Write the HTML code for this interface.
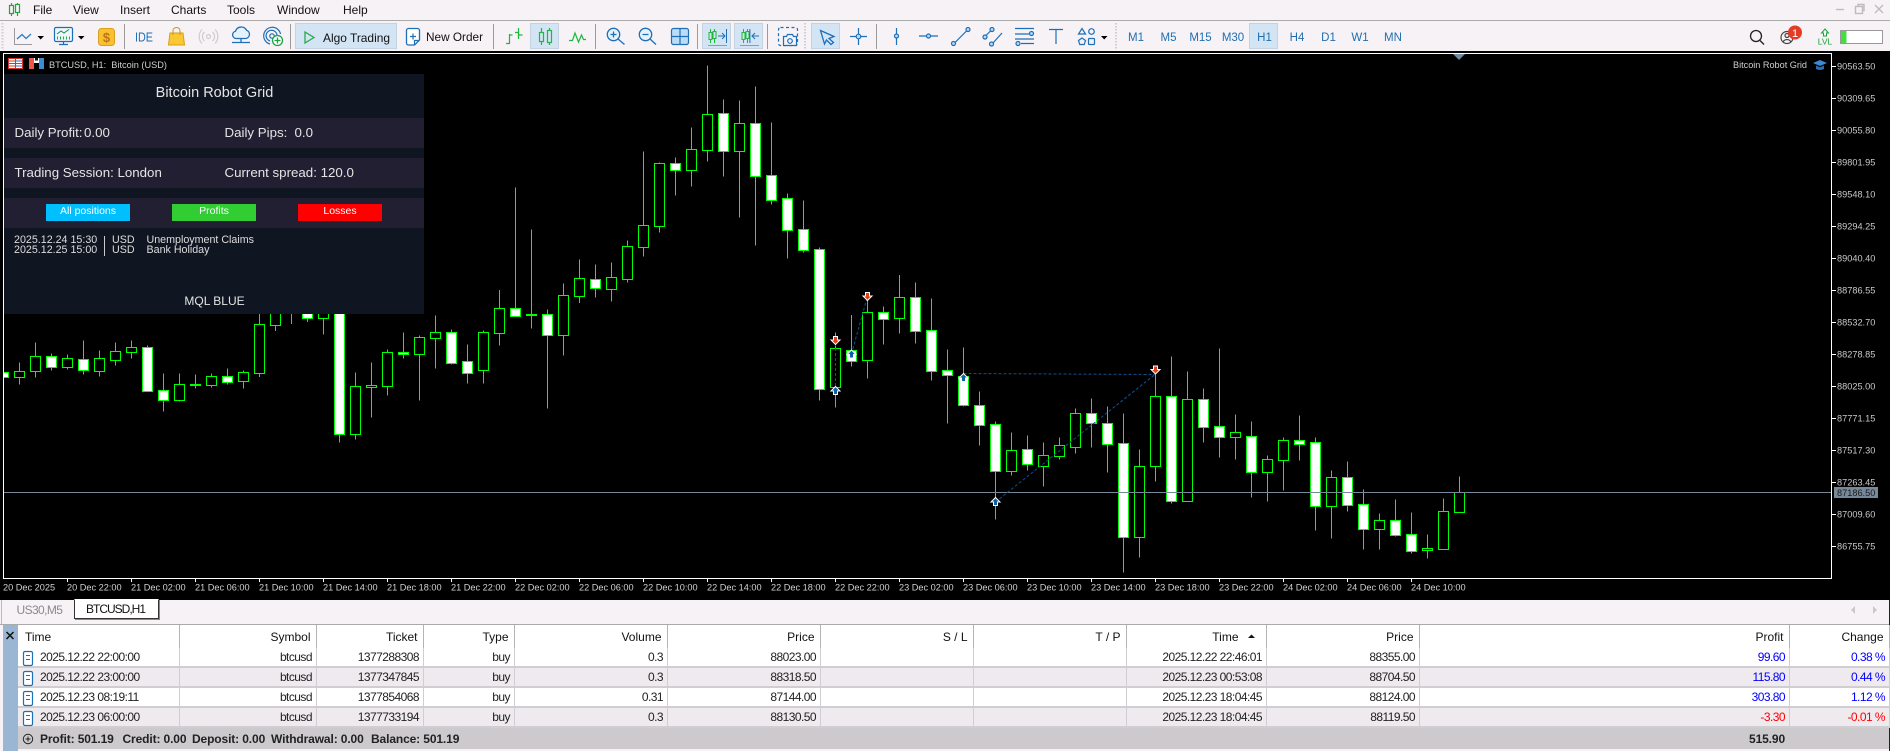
<!DOCTYPE html>
<html><head><meta charset="utf-8"><title>BTCUSD,H1</title>
<style>
html,body{margin:0;padding:0}
body{width:1890px;height:751px;overflow:hidden;position:relative;background:#f6f2f6;font-family:"Liberation Sans",sans-serif}
svg{position:absolute;left:0;top:0;display:block}
svg text{font-family:"Liberation Sans",sans-serif}
.menu span{position:absolute;top:3px;font-size:12px;line-height:14px;color:#111}
#chart{position:absolute;left:0;top:51px;width:1890px;height:549px;background:#000}
.panel{position:absolute;left:4px;top:74px;width:420px;height:240px;background:#101522;color:#e4e4e4}
.band{position:absolute;left:0;width:420px;height:30px;background:#231f33}
.panel span{position:absolute;white-space:nowrap;font-size:13.3px;line-height:16px}
.btn{position:absolute;top:130px;width:84px;height:17px;line-height:15px;text-align:center;color:#fff;font-size:10.5px}
.panel span.news{font-size:10.7px;line-height:12px;color:#ddd}
.tab{position:absolute;font-size:12px;line-height:14px}
#strip{position:absolute;left:3px;top:625px;width:15px;height:126px;background:#9ab6d5}
#tblwrap{position:absolute;left:18px;top:625px;width:1871px;background:#fff}
table{border-collapse:collapse;table-layout:fixed;width:1871px;font-size:12px;letter-spacing:-.55px;color:#222}
td,th{padding:0 3.5px 0 0;text-align:right;font-weight:normal;white-space:nowrap;overflow:hidden;border-right:1px solid #d0ced2}
th{height:23px;padding-right:5px;color:#111;border-right-color:#b4b4b4;letter-spacing:0}
td{height:18px;border-bottom:2px solid #d0ced2}
tr.a td{background:#eeeaee}
td:first-child,th:first-child{text-align:left}
td:first-child{padding-left:22px}
th:first-child{padding-left:7px}
.b{color:#0000ff}.r{color:#ff0000}
#foot{position:absolute;left:18px;top:728px;width:1871px;height:21px;background:#cdcacd;font-weight:bold;font-size:12px;line-height:22px;color:#222}
#foot span{position:absolute;white-space:pre;letter-spacing:-.12px;top:0}
</style></head>
<body>
<div class="menu">
<span style="left:33px">File</span><span style="left:73px">View</span><span style="left:120px">Insert</span><span style="left:171px">Charts</span><span style="left:227px">Tools</span><span style="left:277px">Window</span><span style="left:343px">Help</span>
</div>
<svg width="1890" height="52" viewBox="0 0 1890 52">
<rect x="0" y="20" width="1890" height="1" fill="#aaa"/>
<g fill="none" stroke="#20a83a" stroke-width="1.2"><path d="M11.5 3V16M17.5 3V16"/><rect x="9.5" y="5.5" width="4" height="8" fill="#f6f2f6"/><rect x="15.5" y="4.5" width="4" height="8" fill="#f6f2f6"/></g>
<g fill="none" stroke="#bdbdbd" stroke-width="1.4"><path d="M1836 9.5h8"/><rect x="1855.5" y="6.5" width="7" height="7"/><path d="M1858 6V4.5h6v6h-1"/><path d="M1875 5l8 8M1883 5l-8 8"/></g>
<g stroke="#cfcfcf" stroke-width="2" stroke-dasharray="1.5 1.5"><path d="M2.5 23V49M805 23V49M1116 23V49"/></g>
<g stroke="#9a9a9a" stroke-width="1"><path d="M124.5 24V49M290.5 24V49M493.5 24V49M595.5 24V49M697.5 24V49M767.5 24V49M876.5 24V49"/></g>
<g fill="#d3e5f5" stroke="#c4d3e0"><rect x="295.5" y="23.5" width="101" height="25"/><rect x="530.5" y="23.5" width="28" height="25"/><rect x="702.5" y="23.5" width="28" height="25"/><rect x="734.5" y="23.5" width="28" height="25"/><rect x="811.5" y="23.5" width="28" height="25"/><rect x="1249.5" y="23.5" width="28" height="25"/></g>
<path d="M14.5 28V44.5H32" fill="none" stroke="#9a9a9a"/><path d="M17 39L22 34.5L26 38.5L31 34" fill="none" stroke="#2a7fc4" stroke-width="1.3"/>
<path d="M37.5 36H44L40.7 39.5Z"/>
<rect x="54.5" y="27.5" width="18" height="14" rx="1.5" fill="#eef6fc" stroke="#1d6fb8" stroke-width="1.2"/><path d="M57 34L61 31L64 33L69 29.5" fill="none" stroke="#1d8a4c"/><path d="M57.5 39.5v-3M60.5 39.5v-3M63.5 39.5v-3M66.5 39.5v-3M69.5 39.5v-3" stroke="#2aa84a"/><path d="M59 44.5h9M63.5 41.5v3" stroke="#1d6fb8" stroke-width="1.2"/>
<path d="M78 36H84.5L81.2 39.5Z"/>
<rect x="98.5" y="28.5" width="16" height="17" rx="3" fill="#fbc02d" stroke="#d9a020"/><text x="106.5" y="42" font-size="13" font-weight="bold" fill="#b8741a" text-anchor="middle">$</text>
<text x="135" y="41.5" font-size="12.5" fill="#1f6eb5" textLength="18" lengthAdjust="spacingAndGlyphs">IDE</text>
<path d="M170 33h13l1.5 12h-16z" fill="#fbc733" stroke="#d4a017"/><path d="M173 35V30.5a3.5 3 0 0 1 7 0V35" fill="none" stroke="#c9971f"/>
<g fill="none" stroke="#cdcdcd" stroke-width="1.2"><circle cx="208.5" cy="36.5" r="2"/><path d="M204.5 32a6 6 0 0 0 0 9M212.5 32a6 6 0 0 1 0 9M202 29.5a10 10 0 0 0 0 14M215 29.5a10 10 0 0 1 0 14"/></g>
<path d="M236 38.5a3.7 3.7 0 0 1-.5-7.3a6 6 0 0 1 11-1a4.3 4.3 0 0 1-.5 8.3z" fill="#e6f2fb" stroke="#1d6fb8" stroke-width="1.3"/><path d="M232 42.5h18M241 38.5v4" stroke="#1d6fb8" stroke-width="1.3"/>
<g fill="none" stroke="#1d6fb8" stroke-width="1.2"><path d="M270 44a8.5 8.5 0 1 1 10.5-10"/><path d="M270 41a5.5 5.5 0 1 1 7-6"/><circle cx="272" cy="36" r="2.2"/></g><circle cx="277.5" cy="40.5" r="5" fill="#fff" stroke="#1aa346" stroke-width="1.3"/><path d="M277.5 37.5v6M274.5 40.5h6" stroke="#1aa346" stroke-width="1.3"/>
<path d="M305 32L314 37.5L305 43Z" fill="none" stroke="#2aa84a" stroke-width="1.3"/>
<text x="323" y="42" font-size="12" fill="#111" textLength="67" lengthAdjust="spacingAndGlyphs">Algo Trading</text>
<path d="M408.5 28.5h9a2 2 0 0 1 2 2V40l-5 5h-6a2 2 0 0 1-2-2v-12.5a2 2 0 0 1 2-2z" fill="#fff" stroke="#1d6fb8" stroke-width="1.3"/><path d="M419 40.5h-4.5V45M413 33.5v6M410 36.5h6" fill="none" stroke="#1d6fb8" stroke-width="1.2"/>
<text x="426" y="41" font-size="12" fill="#111" textLength="57" lengthAdjust="spacingAndGlyphs">New Order</text>
<path d="M509.5 34V44M506 43.5h3.5M509.5 35h3M518.5 28V39M515 32.5h3.5M518.5 35h4" fill="none" stroke="#1db83c" stroke-width="1.2"/>
<g fill="none" stroke="#1db83c" stroke-width="1.2"><path d="M541.5 28V45M549.5 28V45"/><rect x="539.5" y="32.5" width="4" height="9" fill="#d3e5f5"/><rect x="547.5" y="30.5" width="4" height="12" fill="#d3e5f5"/></g>
<path d="M569 40.5h3.5L575 33L578.5 42L581.5 35L583.5 39.5H586" fill="none" stroke="#1db83c" stroke-width="1.2"/>
<g fill="none" stroke="#1d6fb8" stroke-width="1.3"><circle cx="613.5" cy="34.5" r="6.2" fill="#e6f2fb"/><path d="M618 39L624.5 44.5M610.5 34.5h6M613.5 31.5v6"/><circle cx="645.5" cy="34.5" r="6.2" fill="#e6f2fb"/><path d="M650 39L656 44.5M642.5 34.5h6"/></g>
<rect x="671.5" y="28.5" width="17" height="16" rx="2" fill="#bcdcf6" stroke="#1d6fb8" stroke-width="1.2"/><path d="M680 28.5v16M671.5 36.5h17" stroke="#1d6fb8" stroke-width="1.2"/>
<g fill="none" stroke-width="1"><g stroke="#1db83c"><path d="M710.5 29V43M714.5 29V43M743.5 29V43M747.5 29V43"/><rect x="709" y="32.5" width="3" height="7" fill="#d3e5f5"/><rect x="713" y="31.5" width="3" height="7" fill="#d3e5f5"/><rect x="742" y="32.5" width="3" height="7" fill="#d3e5f5"/><rect x="746" y="31.5" width="3" height="7" fill="#d3e5f5"/></g><path d="M718 36h7M722 33l3 3l-3 3M726.5 29V43" stroke="#1d6fb8"/><path d="M759 36h-7M755 33l-3 3l3 3M749.9 29V43" stroke="#1d6fb8"/><path d="M708 45.5h19M740 45.5h19" stroke="#999"/></g>
<rect x="778.5" y="27.5" width="19" height="18" rx="2" fill="none" stroke="#1d6fb8" stroke-dasharray="3 2.5" stroke-width="1.2"/><path d="M783.5 36.5h3l1-2h5l1 2h3v9h-13z" fill="#f6f2f6" stroke="#1d6fb8" stroke-width="1.2"/><circle cx="790" cy="41" r="2.3" fill="none" stroke="#1d6fb8" stroke-width="1.2"/>
<path d="M820.5 30.5L834 36.5L829 38.5L833.5 42.5L831 44.5L826.5 40L824.5 44Z" fill="#d3e5f5" stroke="#1d6fb8" stroke-width="1.3"/>
<g fill="none" stroke="#1d6fb8" stroke-width="1.2">
<path d="M858.5 28V45M850 36.5H867"/><circle cx="858.5" cy="36.5" r="2.3" fill="#bcdcf6"/>
<path d="M896.5 28V45"/><circle cx="896.5" cy="36" r="2" fill="#bcdcf6"/>
<path d="M919 36H938"/><circle cx="928.5" cy="36" r="2" fill="#bcdcf6"/>
<path d="M955 42.5L967 30.5"/><circle cx="953.5" cy="43.5" r="2" fill="#bcdcf6"/><circle cx="968" cy="29.5" r="2" fill="#bcdcf6"/>
<path d="M986 35.5L991 30.5M993 43L1002 33"/><circle cx="985" cy="37" r="2" fill="#bcdcf6"/><circle cx="992" cy="29.5" r="2" fill="#bcdcf6"/><circle cx="991.5" cy="44" r="2" fill="#bcdcf6"/>
<path d="M1015 28.5H1034M1015 34H1029M1015 39H1034M1021 43.5H1034"/><circle cx="1031.5" cy="33.5" r="2" fill="#bcdcf6"/><circle cx="1018" cy="43.5" r="2" fill="#bcdcf6"/>
<path d="M1049 29.5H1063M1056 29.5V44"/>
<path d="M1082 28.5L1085.5 34H1078.5Z"/><circle cx="1091.5" cy="31.5" r="2.8"/><path d="M1082 38L1085.5 40.5L1084.2 44.5H1079.8L1078.5 40.5Z"/><rect x="1088.5" y="38.5" width="6" height="6" rx="1"/>
</g>
<path d="M1101 36H1107.5L1104.2 39.5Z"/>
<g font-size="11.5" fill="#1f6fb0" text-anchor="middle"><text x="1136" y="41">M1</text><text x="1168.5" y="41">M5</text><text x="1200.5" y="41">M15</text><text x="1233" y="41">M30</text><text x="1264.5" y="41">H1</text><text x="1297" y="41">H4</text><text x="1328.5" y="41">D1</text><text x="1360" y="41">W1</text><text x="1393" y="41">MN</text></g>
<g fill="none" stroke="#222" stroke-width="1.3"><circle cx="1756" cy="36" r="5.5"/><path d="M1760 40.5L1764 44.5"/></g>
<g fill="none" stroke="#444" stroke-width="1.2"><circle cx="1787" cy="37.5" r="6"/><circle cx="1787" cy="35.5" r="2"/><path d="M1783 42a4.5 4.5 0 0 1 8 0"/></g>
<circle cx="1795" cy="32.5" r="7" fill="#e53a26"/><text x="1795" y="37" font-size="11" fill="#fff" text-anchor="middle">1</text>
<path d="M1825 29L1828.5 33H1826.5V36H1823.5V33H1821.5Z" fill="none" stroke="#17a535"/><text x="1825" y="44.5" font-size="8.5" fill="#17a535" text-anchor="middle">LVL</text>
<rect x="1840.5" y="30.5" width="42" height="13" fill="#fff" stroke="#999"/><rect x="1841" y="31" width="5.5" height="12" fill="#44dd44"/>
</svg>

<div id="chart"></div>
<svg width="1890" height="600" viewBox="0 0 1890 600">
<path fill="none" stroke="#00ff00" d="M19.5 362.5V384.5M35.5 342.5V377.5M51.5 353.5V370.5M67.5 354.5V369.5M83.5 340.5V374.5M99.5 350.5V376.5M115.5 342.5V365.5M131.5 340.5V358.5M147.5 345.5V391.5M163.5 373.5V411.5M179.5 373.5V401.5M195.5 374.5V388.5M211.5 373.5V387.5M227.5 368.5V384.5M243.5 370.5V388.5M259.5 310V377M275.5 300V331M291.5 300V324M307.5 300V322M323.5 300V334.5M339.5 300V442.5M355.5 372.5V439.5M371.5 362.5V417.5M387.5 349.5V395.5M403.5 332.5V358.5M419.5 335.5V400.5M435.5 315.5V368.5M451.5 329.5V364.5M467.5 344.5V383.5M483.5 330.5V383.5M499.5 290V345.5M515.5 187.5V316M531.5 229.5V328.5M547.5 309.5V408.5M563.5 283.5V355.5M579.5 259.5V303M595.5 264.5V297.5M611.5 262.5V301.5M627.5 240.5V282.5M643.5 151.5V256.5M659.5 162.5V232.5M675.5 157.5V195.5M691.5 127.5V186.5M707.5 65.5V161.5M723.5 99.5V176.5M739.5 100.5V217.5M755.5 86.5V245.5M771.5 122.5V204.5M787.5 193.5V258.5M803.5 200.5V252.5M819.5 247.5V400.5M835.5 332.5V407.5M851.5 315V366.5M867.5 300V378.5M883.5 306.5V344.5M899.5 275V333.5M915.5 282.5V343.5M931.5 298.5V380.5M947.5 349.5V423.5M963.5 347.5V406.5M979.5 391.5V445.5M995.5 421.5V519.5M1011.5 432.5V475.5M1027.5 435.5V470.5M1043.5 442.5V486.5M1059.5 437.5V459.5M1075.5 408.5V453.5M1091.5 398.5V447.5M1107.5 406.5V472.5M1123.5 413.5V572.5M1139.5 449.5V557.5M1155.5 373.5V481.5M1171.5 356.5V503.5M1187.5 371.5V501.5M1203.5 388.5V442.5M1219.5 348.5V457.5M1235.5 414.5V459.5M1251.5 421.5V497.5M1267.5 455.5V501.5M1283.5 437.5V490.5M1299.5 415.5V460.5M1315.5 437.5V530.5M1331.5 470.5V538.5M1347.5 461.5V511.5M1363.5 489.5V549.5M1379.5 513.5V549.5M1395.5 499.5V536.5M1411.5 512.5V553.5M1427.5 534.5V558.5M1443.5 498.5V549.5M1459.5 476.5V512.5"/>
<path fill="#000" stroke="#00ff00" d="M14.5 371.5h10v6h-10zM30.5 356.5h10v15h-10zM62.5 358.5h10v9h-10zM94.5 358.5h10v13h-10zM110.5 351.5h10v9h-10zM126.5 347.5h10v5h-10zM174.5 384.5h10v16h-10zM206.5 376.5h10v9h-10zM238.5 372.5h10v9h-10zM254.5 324.5h10v49h-10zM270.5 300.5h10v25h-10zM318.5 312.5h10v6h-10zM350.5 386.5h10v48h-10zM366.5 385.5h10v2h-10zM382.5 352.5h10v34h-10zM414.5 337.5h10v17h-10zM430.5 332.5h10v6h-10zM478.5 332.5h10v38h-10zM494.5 308.5h10v25h-10zM558.5 295.5h10v40h-10zM574.5 278.5h10v18h-10zM606.5 277.5h10v12h-10zM622.5 246.5h10v33h-10zM638.5 225.5h10v22h-10zM654.5 163.5h10v63h-10zM686.5 149.5h10v21h-10zM702.5 114.5h10v36h-10zM734.5 123.5h10v28h-10zM830.5 348.5h10v39h-10zM862.5 312.5h10v48h-10zM894.5 297.5h10v21h-10zM1006.5 450.5h10v21h-10zM1038.5 455.5h10v11h-10zM1054.5 445.5h10v11h-10zM1070.5 413.5h10v34h-10zM1134.5 466.5h10v71h-10zM1150.5 396.5h10v70h-10zM1182.5 399.5h10v102h-10zM1230.5 432.5h10v5h-10zM1262.5 459.5h10v13h-10zM1278.5 440.5h10v20h-10zM1326.5 477.5h10v29h-10zM1374.5 520.5h10v9h-10zM1422.5 548.5h10v2h-10zM1438.5 511.5h10v38h-10zM1454.5 492.5h10v20h-10z"/>
<path fill="#fff" stroke="#00ff00" d="M3.5 372.5H8.5v5H3.5zM46.5 356.5h10v11h-10zM78.5 359.5h10v11h-10zM142.5 347.5h10v44h-10zM158.5 390.5h10v10h-10zM190.5 384.5h10v1h-10zM222.5 376.5h10v6h-10zM302.5 300.5h10v18h-10zM334.5 300.5h10v134h-10zM398.5 352.5h10v2h-10zM446.5 332.5h10v31h-10zM462.5 361.5h10v12h-10zM510.5 308.5h10v8h-10zM526.5 314.5h10v1h-10zM542.5 314.5h10v21h-10zM590.5 279.5h10v9h-10zM670.5 163.5h10v7h-10zM718.5 113.5h10v38h-10zM750.5 123.5h10v53h-10zM766.5 175.5h10v25h-10zM782.5 198.5h10v32h-10zM798.5 229.5h10v21h-10zM814.5 249.5h10v140h-10zM846.5 350.5h10v11h-10zM878.5 312.5h10v7h-10zM910.5 297.5h10v34h-10zM926.5 330.5h10v41h-10zM942.5 370.5h10v5h-10zM958.5 376.5h10v29h-10zM974.5 405.5h10v20h-10zM990.5 424.5h10v47h-10zM1022.5 449.5h10v15h-10zM1086.5 413.5h10v10h-10zM1102.5 423.5h10v21h-10zM1118.5 443.5h10v94h-10zM1166.5 396.5h10v105h-10zM1198.5 399.5h10v28h-10zM1214.5 426.5h10v11h-10zM1246.5 436.5h10v36h-10zM1294.5 440.5h10v4h-10zM1310.5 442.5h10v64h-10zM1342.5 477.5h10v28h-10zM1358.5 504.5h10v25h-10zM1390.5 520.5h10v15h-10zM1406.5 534.5h10v17h-10z"/>
<rect x="3" y="492" width="1828" height="1" fill="#778899"/>
<g fill="none" stroke="#0e4f8f" stroke-dasharray="3 2"><path d="M835.5 391V340"/><path d="M851.5 354L867.5 296"/><path d="M963.5 373.5L1155.5 374.5"/><path d="M995.5 502L1155.5 374"/></g>
<g stroke="#fff" stroke-width="1" fill="#0a62ad"><path d="M835.5 386.5l4.5 4.5h-2.5v3.5h-4v-3.5h-2.500z"/><path d="M995.5 497.5l4.5 4.500h-2.5v3.5h-4v-3.5h-2.5z"/><path d="M851.5 350l4.500 4.500h-2.500v3.500h-4v-3.500h-2.500z"/><path d="M963.5 373.500l4.500 4.500h-2.500v3.500h-4v-3.500h-2.500z"/></g>
<g stroke="#fff" stroke-width="1" fill="#e0401a"><path d="M835.5 344.5l-4.5-4.5h2.5v-3.5h4v3.5h2.5z"/><path d="M867.5 300.5l-4.5-4.5h2.5v-3.5h4v3.5h2.5z"/><path d="M1155.5 374l-4.5-4.5h2.5v-3.5h4v3.5h2.5z"/></g>
<rect x="3.5" y="53.5" width="1828" height="525" fill="none" stroke="#fff"/>
<path d="M1453 54h12l-6 6z" fill="#6f8aa5"/>
<rect x="8.5" y="58.5" width="14" height="10" fill="#fff" stroke="#d8352a"/><path d="M9 61h6M9 63.5h6M9 66h6" stroke="#d8352a"/><path d="M16 61h6M16 63.5h6M16 66h6" stroke="#2a6fc4"/><path d="M15.5 58.5v10" stroke="#2a6fc4"/>
<rect x="29" y="58" width="5" height="11" fill="#e8574a"/><rect x="39" y="58" width="5" height="11" fill="#3a8ad4"/><rect x="34" y="58" width="5" height="5" fill="#fff"/><rect x="35" y="58" width="3" height="2.5" fill="#111"/>
<text x="49" y="68.2" font-size="9.2" fill="#cfcfcf">BTCUSD, H1:&#160;&#160;Bitcoin (USD)</text>
<text x="1733" y="68.2" font-size="9.2" fill="#cfcfcf" textLength="74" lengthAdjust="spacingAndGlyphs">Bitcoin Robot Grid</text>
<path d="M1813 63l7-3l7 3l-7 3z" fill="#3a8ad4"/><path d="M1816 65.5v3.5q4 2 8 0v-3.5l-4 1.7z" fill="#2a6fb4"/>
<path stroke="#fff" d="M1832 66.5h4M1832 98.5h4M1832 130.5h4M1832 162.5h4M1832 194.5h4M1832 226.5h4M1832 258.5h4M1832 290.5h4M1832 322.5h4M1832 354.5h4M1832 386.5h4M1832 418.5h4M1832 450.5h4M1832 482.5h4M1832 514.5h4M1832 546.5h4"/>
<g font-size="9.2" fill="#c9c9c9">
<text x="1837" y="69.6">90563.50</text><text x="1837" y="101.6">90309.65</text><text x="1837" y="133.6">90055.80</text><text x="1837" y="165.6">89801.95</text><text x="1837" y="197.6">89548.10</text><text x="1837" y="229.6">89294.25</text><text x="1837" y="261.6">89040.40</text><text x="1837" y="293.6">88786.55</text><text x="1837" y="325.6">88532.70</text><text x="1837" y="357.6">88278.85</text><text x="1837" y="389.6">88025.00</text><text x="1837" y="421.6">87771.15</text><text x="1837" y="453.6">87517.30</text><text x="1837" y="485.6">87263.45</text><text x="1837" y="517.6">87009.60</text><text x="1837" y="549.6">86755.75</text>
</g>
<rect x="1834" y="487" width="44" height="11" fill="#778899"/><text x="1837" y="496" font-size="9.2" fill="#1a1a1a">87186.50</text>
<path stroke="#fff" d="M67.5 579v3M131.5 579v3M195.5 579v3M259.5 579v3M323.5 579v3M387.5 579v3M451.5 579v3M515.5 579v3M579.5 579v3M643.5 579v3M707.5 579v3M771.5 579v3M835.5 579v3M899.5 579v3M963.5 579v3M1027.5 579v3M1091.5 579v3M1155.5 579v3M1219.5 579v3M1283.5 579v3M1347.5 579v3M1411.5 579v3"/>
<g font-size="9.2" fill="#d0d0d0">
<text x="3" y="590.6">20 Dec 2025</text><text x="67" y="590.6">20 Dec 22:00</text><text x="131" y="590.6">21 Dec 02:00</text><text x="195" y="590.6">21 Dec 06:00</text><text x="259" y="590.6">21 Dec 10:00</text><text x="323" y="590.6">21 Dec 14:00</text><text x="387" y="590.6">21 Dec 18:00</text><text x="451" y="590.6">21 Dec 22:00</text><text x="515" y="590.6">22 Dec 02:00</text><text x="579" y="590.6">22 Dec 06:00</text><text x="643" y="590.6">22 Dec 10:00</text><text x="707" y="590.6">22 Dec 14:00</text><text x="771" y="590.6">22 Dec 18:00</text><text x="835" y="590.6">22 Dec 22:00</text><text x="899" y="590.6">23 Dec 02:00</text><text x="963" y="590.6">23 Dec 06:00</text><text x="1027" y="590.6">23 Dec 10:00</text><text x="1091" y="590.6">23 Dec 14:00</text><text x="1155" y="590.6">23 Dec 18:00</text><text x="1219" y="590.6">23 Dec 22:00</text><text x="1283" y="590.6">24 Dec 02:00</text><text x="1347" y="590.6">24 Dec 06:00</text><text x="1411" y="590.6">24 Dec 10:00</text>
</g>
</svg>

<div class="panel">
<span style="left:0;width:421px;text-align:center;top:11px;font-size:14.5px">Bitcoin Robot Grid</span>
<div class="band" style="top:44px"></div><div class="band" style="top:84px"></div><div class="band" style="top:124px"></div>
<span style="left:10.5px;top:51px">Daily Profit:</span><span style="left:80px;top:51px">0.00</span>
<span style="left:220.5px;top:51px">Daily Pips:</span><span style="left:290.5px;top:51px">0.0</span>
<span style="left:10.5px;top:91px">Trading Session: London</span>
<span style="left:220.5px;top:91px">Current spread: 120.0</span>
<div class="btn" style="left:42px;background:#00bfff">All positions</div>
<div class="btn" style="left:168px;background:#32cd32">Profits</div>
<div class="btn" style="left:294px;background:#ff0000">Losses</div>
<span class="news" style="left:10px;top:160px">2025.12.24 15:30</span><span class="news" style="left:108px;top:160px">USD</span><span class="news" style="left:142.5px;top:160px">Unemployment Claims</span>
<span class="news" style="left:10px;top:170px">2025.12.25 15:00</span><span class="news" style="left:108px;top:170px">USD</span><span class="news" style="left:142.5px;top:170px">Bank Holiday</span>
<div style="position:absolute;left:100px;top:162px;width:1px;height:20px;background:#ccc"></div>
<span style="left:0;width:421px;text-align:center;top:219px;font-size:12px">MQL BLUE</span>
</div>

<div style="position:absolute;left:1px;top:600px;width:1px;height:24px;background:#bbb"></div>
<div class="tab" style="left:16.5px;top:603px;color:#8a8a8a;letter-spacing:-.6px">US30,M5</div>
<div style="position:absolute;left:74px;top:599px;width:83px;height:18px;background:#fff;border:1px solid #333;border-top:1px solid #fff;box-shadow:1px 1px 0 #888"></div>
<div class="tab" style="left:86px;top:602px;color:#111;letter-spacing:-1px">BTCUSD,H1</div>
<svg style="left:1848px;top:603px" width="32" height="14" viewBox="0 0 32 14"><path d="M7 3L3 7L7 11ZM25 3L29 7L25 11Z" fill="#c9c9c9"/></svg>
<div style="position:absolute;left:0;top:624px;width:1890px;height:1px;background:#aaa"></div>
<div style="position:absolute;right:0;top:600px;width:1px;height:151px;background:#222"></div>

<div id="strip"></div>
<svg style="left:3px;top:625px" width="15" height="24" viewBox="0 0 15 24"><path d="M3.5 7L10.5 14M10.5 7L3.5 14" stroke="#111" stroke-width="1.5"/></svg>

<div id="tblwrap">
<table>
<colgroup><col style="width:161px"><col style="width:137px"><col style="width:107px"><col style="width:91px"><col style="width:153px"><col style="width:153px"><col style="width:153px"><col style="width:153px"><col style="width:140px"><col style="width:153px"><col style="width:370px"><col style="width:100px"></colgroup>
<tr><th>Time</th><th>Symbol</th><th>Ticket</th><th>Type</th><th>Volume</th><th>Price</th><th>S / L</th><th>T / P</th><th style="padding-right:27px">Time</th><th>Price</th><th>Profit</th><th>Change</th></tr>
<tr><td>2025.12.22 22:00:00</td><td>btcusd</td><td>1377288308</td><td>buy</td><td>0.3</td><td>88023.00</td><td></td><td></td><td>2025.12.22 22:46:01</td><td>88355.00</td><td class="b">99.60</td><td class="b">0.38 %</td></tr>
<tr class="a"><td>2025.12.22 23:00:00</td><td>btcusd</td><td>1377347845</td><td>buy</td><td>0.3</td><td>88318.50</td><td></td><td></td><td>2025.12.23 00:53:08</td><td>88704.50</td><td class="b">115.80</td><td class="b">0.44 %</td></tr>
<tr><td>2025.12.23 08:19:11</td><td>btcusd</td><td>1377854068</td><td>buy</td><td>0.31</td><td>87144.00</td><td></td><td></td><td>2025.12.23 18:04:45</td><td>88124.00</td><td class="b">303.80</td><td class="b">1.12 %</td></tr>
<tr class="a"><td>2025.12.23 06:00:00</td><td>btcusd</td><td>1377733194</td><td>buy</td><td>0.3</td><td>88130.50</td><td></td><td></td><td>2025.12.23 18:04:45</td><td>88119.50</td><td class="r">-3.30</td><td class="r">-0.01 %</td></tr>
</table>
</div>
<svg style="left:18px;top:625px" width="1300" height="125" viewBox="18 625 1300 125">
<g fill="#fff" stroke="#1d6fb8" stroke-width="1.2"><rect x="23.5" y="651.5" width="9" height="14" rx="1.5"/><rect x="23.5" y="671.5" width="9" height="14" rx="1.5"/><rect x="23.5" y="691.5" width="9" height="14" rx="1.5"/><rect x="23.5" y="711.5" width="9" height="14" rx="1.5"/></g>
<path stroke="#1d6fb8" d="M26 655.5h4M26 659.5h4M26 675.5h4M26 679.5h4M26 695.5h4M26 699.5h4M26 715.5h4M26 719.5h4"/>
<path d="M1248 638l3.5-3.5l3.5 3.5z" fill="#111"/>
</svg>
<div id="foot">
<span style="left:22px">Profit: 501.19</span><span style="left:104.5px">Credit: 0.00</span><span style="left:174px">Deposit: 0.00</span><span style="left:253px">Withdrawal: 0.00</span><span style="left:353px">Balance: 501.19</span>
<span style="right:104px">515.90</span>
</div>
<svg style="left:22px;top:733px" width="12" height="12" viewBox="0 0 12 12"><circle cx="6" cy="6" r="4.7" fill="none" stroke="#222"/><path d="M3.5 6h5M6 3.5v5" stroke="#222"/></svg>
</body></html>
